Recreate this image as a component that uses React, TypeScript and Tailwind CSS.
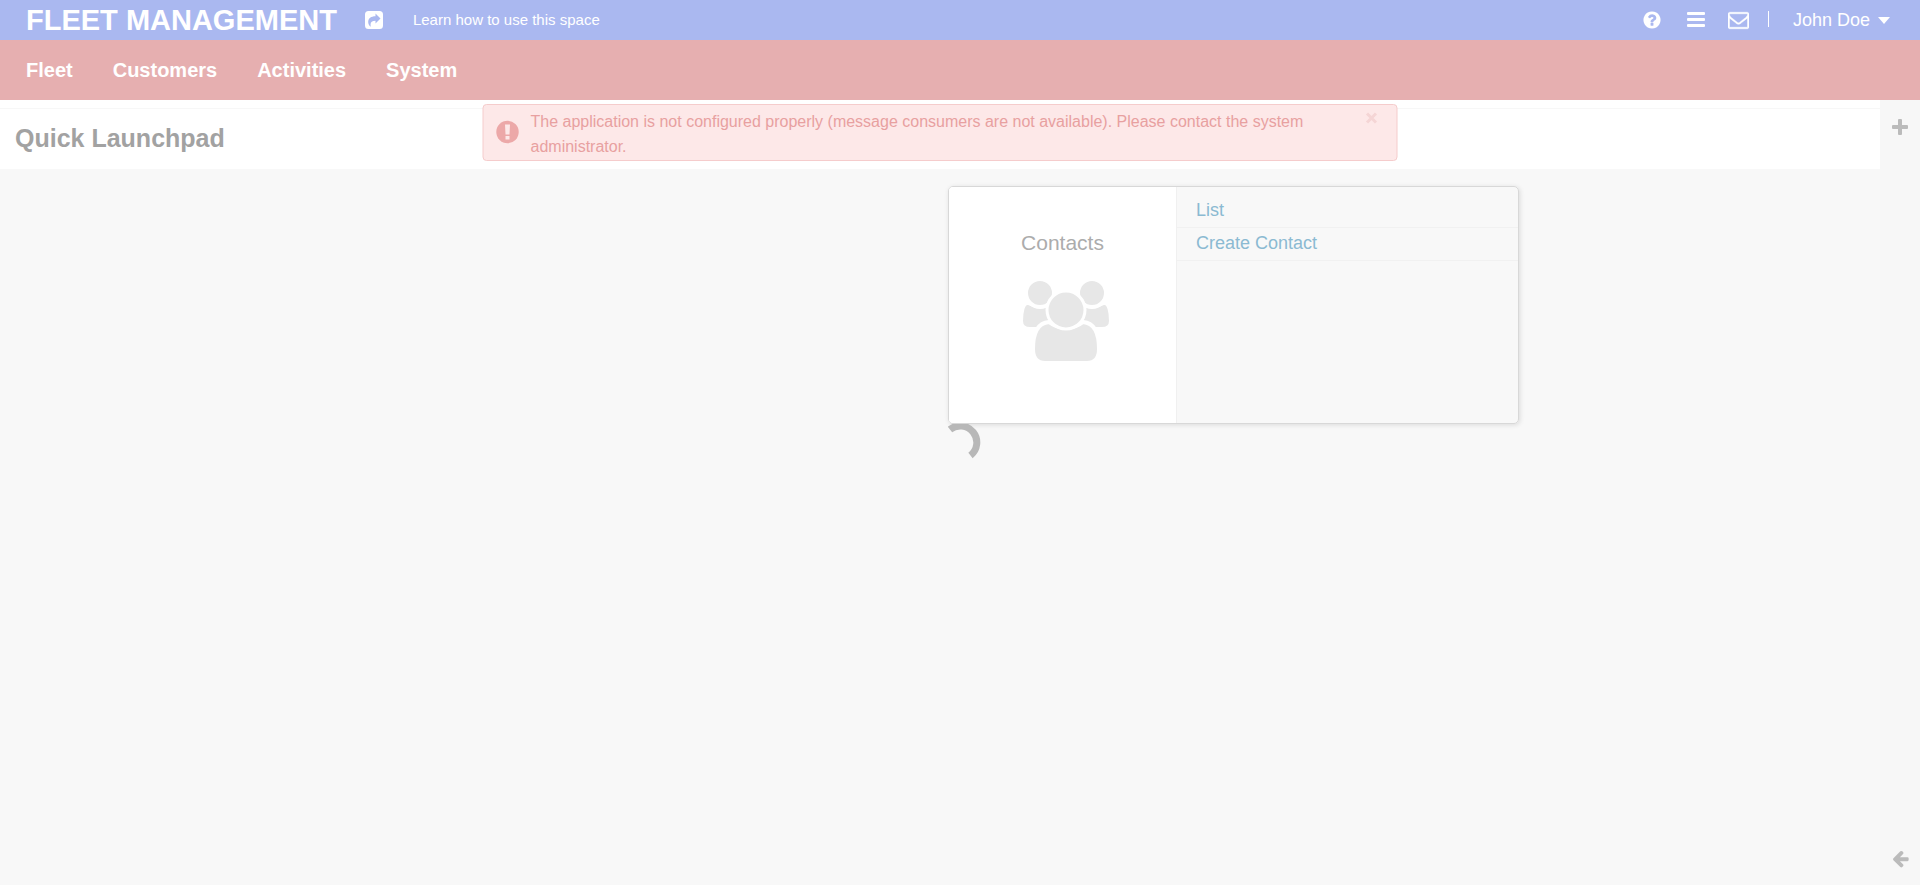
import React from "react";

const QUESTION =
  "M1024 1376v-192q0-14-9-23t-23-9h-192q-14 0-23 9t-9 23v192q0 14 9 23t23 9h192q14 0 23-9t9-23zm256-672q0-88-55.5-163t-138.5-116-170-41q-243 0-371 213-15 24 8 42l132 100q7 6 19 6 16 0 25-12 53-68 86-92 34-24 86-24 48 0 85.5 26t37.5 59q0 38-20 61t-68 45q-63 28-115.5 86.5t-52.5 125.5v36q0 14 9 23t23 9h192q14 0 23-9t9-23q0-19 21.5-49.5t54.5-49.5q32-18 49-28.5t46-35 44.5-48 28-60.5 12.5-81zm384 192q0 209-103 385.5t-279.5 279.5-385.5 103-385.5-103-279.5-279.5-103-385.5 103-385.5 279.5-279.5 385.5-103 385.5 103 279.5 279.5 103 385.5z";
const ENVELOPE =
  "M1664 1504v-768q-32 36-69 66-268 206-426 338-51 43-83 67t-86.500 48.500-102.500 24.500h-2q-48 0-102.500-24.500t-86.500-48.500-83-67q-158-132-426-338-37-30-69-66v768q0 13 9.500 22.500t22.500 9.500h1472q13 0 22.500-9.500t9.500-22.500zm0-1051v-24.500l-.5-13-3-12.500-5.500-9-9-7.500-14-2.500h-1472q-13 0-22.500 9.500t-9.500 22.500q0 168 147 284 193 152 401 317 6 5 35 29.500t46 37.500 44.500 31.500 50.500 27.500 43 9h2q20 0 43-9t50.500-27.500 44.500-31.500 46-37.500 35-29.500q208-165 401-317 54-43 100.500-115.500t46.500-131.500zm128-37v1088q0 66-47 113t-113 47h-1472q-66 0-113-47t-47-113v-1088q0-66 47-113t113-47h1472q66 0 113 47t47 113z";
const ARROW_LEFT =
  "M1664 896v128q0 53-32.5 90.5t-84.5 37.5h-704l293 294q38 36 38 90t-38 90l-75 76q-37 37-90 37-52 0-91-37l-651-652q-37-37-37-90 0-52 37-91l651-650q38-38 91-38 52 0 90 38l75 74q38 38 38 91t-38 91l-293 293h704q52 0 84.5 37.5t32.5 90.5z";

const menu = ["Fleet", "Customers", "Activities", "System"];
const contactLinks = ["List", "Create Contact"];

function TopBar() {
  return (
    <header className="flex h-10 items-center bg-[#aab8f0] pl-[26px] pr-[30px] text-white">
      <h1 className="text-[29px] font-bold leading-10">FLEET MANAGEMENT</h1>
      <button aria-label="Share" className="ml-7">
        <svg width="18" height="18" viewBox="0 0 18 18">
          <path
            fillRule="evenodd"
            fill="currentColor"
            d="M3.500 0h11A3.500 3.500 0 0 1 18 3.500v11a3.500 3.500 0 0 1-3.500 3.500h-11A3.500 3.500 0 0 1 0 14.500v-11A3.500 3.500 0 0 1 3.500 0zM10.500 2.500v2.700C6 5.200 3.200 7.300 3.200 11c0 1.800.8 3.300 2 4.500.3.200.6 0 .5-.4C5 11.500 6.500 9.800 10.500 9.800v2.700l5-5z"
          />
        </svg>
      </button>
      <a href="#learn" className="ml-[30px] text-[15px] leading-10">
        Learn how to use this space
      </a>
      <div className="ml-auto flex items-center">
        <button aria-label="Help">
          <svg width="20" height="20" viewBox="0 0 1792 1792" fill="currentColor">
            <path d={QUESTION} />
          </svg>
        </button>
        <button aria-label="Menu" className="ml-[25px]">
          <svg width="18" height="16" viewBox="0 0 18 16" fill="currentColor">
            <rect y="0" width="18" height="3" rx="1" />
            <rect y="6" width="18" height="3" rx="1" />
            <rect y="12" width="18" height="3" rx="1" />
          </svg>
        </button>
        <button aria-label="Messages" className="ml-[23px]">
          <svg
            width="21"
            height="21"
            viewBox="0 64 1792 1792"
            fill="currentColor"
            stroke="currentColor"
            strokeWidth="40"
          >
            <path d={ENVELOPE} />
          </svg>
        </button>
        <span className="mb-[3px] ml-[19px] h-4 w-px bg-white" />
        <button className="ml-6 flex items-center gap-2 text-[18px] leading-10">
          John Doe
          <svg width="12" height="7" viewBox="0 0 12 7" fill="currentColor">
            <path d="M0 0h12L6 7z" />
          </svg>
        </button>
      </div>
    </header>
  );
}

function Alert() {
  return (
    <div
      role="alert"
      className="absolute left-1/2 top-1 flex w-[915px] -translate-x-1/2 items-center rounded border border-[#f5cccc] bg-[#fde8e8] pb-px pl-3 pt-1 text-base text-[#e8a0a0]"
    >
      <svg className="mb-1 shrink-0" width="24" height="24" viewBox="0 0 24 24">
        <circle cx="12" cy="12" r="11.200" fill="#eca8a8" />
        <path d="M9.500 4.500h5l-.5 10h-4zM10 16h4v3.500h-4z" fill="#fde8e8" />
      </svg>
      <p className="ml-[11px] w-[800px] leading-[25px]">
        The application is not configured properly (message consumers are not available). Please
        contact the system administrator.
      </p>
      <button aria-label="Close" className="ml-auto mr-[19px] self-start pt-[3px] text-[#f5d5d5]">
        <svg width="12" height="12" viewBox="0 0 12 12" fill="none" stroke="currentColor" strokeWidth="3">
          <path d="M1.500 1.500l9 9M10.500 1.500l-9 9" />
        </svg>
      </button>
    </div>
  );
}

function ContactsIcon() {
  return (
    <svg width="88" height="84" viewBox="0 0 88 84" fill="#e7e7e7" stroke="#fff" strokeWidth="2">
      <path d="M6 23c7 4 17 4 23 1v23H8c-5 0-8-2-8-7C0 31 2 22 6 23z" />
      <path d="M82 23c-7 4-17 4-23 1v23h21c5 0 8-2 8-7 0-9-2-18-6-17z" />
      <circle cx="18" cy="12" r="14" strokeWidth="4" />
      <circle cx="70" cy="12" r="14" strokeWidth="4" />
      <path
        strokeWidth="4"
        d="M27 41c10 8 24 8 34 0 12 1 16 13 16 27 0 10-5 14-12 14H23c-7 0-12-4-12-14 0-14 4-26 16-27z"
      />
      <circle cx="44" cy="29" r="19" strokeWidth="3" />
    </svg>
  );
}

export default function App() {
  return (
    <div className="flex min-h-screen flex-col bg-[#f8f8f8] font-['Liberation_Sans',Arial,sans-serif]">
      <TopBar />
      <nav className="flex h-[60px] items-center gap-10 bg-[#e6afb0] pl-[26px] text-xl font-bold text-white">
        {menu.map((item) => (
          <a key={item} href={"#" + item.toLowerCase()}>
            {item}
          </a>
        ))}
      </nav>
      <div className="flex flex-1">
        <main className="relative flex-1">
          <div className="h-[69px] bg-white pt-2">
            <div className="flex h-[61px] items-center border-t border-[#f7f7f7] pl-[15px]">
              <h2 className="text-[25px] font-bold text-[#a2a2a2]">Quick Launchpad</h2>
            </div>
          </div>
          <Alert />
          <div className="ml-[948px] pt-[17px]">
            <section className="flex h-[238px] w-[571px] overflow-hidden rounded-[5px] border border-[#d8d8d8] shadow-[1px_1px_5px_rgba(0,0,0,0.12)]">
              <div className="flex w-[228px] flex-col items-center border-r border-[#f0f0f0] bg-white pt-11">
                <h3 className="text-[21px] leading-6 text-[#acacac]">Contacts</h3>
                <div className="ml-[6px] mt-[26px]">
                  <ContactsIcon />
                </div>
              </div>
              <ul className="flex-1 pt-2 text-[18px]">
                {contactLinks.map((item) => (
                  <li key={item} className="border-b border-[#f1f1f1] pb-[2px] pl-[19px]">
                    <a href="#contacts" className="block leading-[30px] text-[#8bbad2]">
                      {item}
                    </a>
                  </li>
                ))}
              </ul>
            </section>
            <svg role="status" aria-label="Loading" width="36" height="40" viewBox="0 0 36 40" fill="none">
              <path d="M2 5.500A16.500 16.500 0 0 1 22.500 31.500" stroke="#b8b8b8" strokeWidth="7" />
            </svg>
          </div>
        </main>
        <aside className="flex w-10 flex-col items-center justify-between bg-[#f7f7f7] pb-[17px] pt-[19px] text-[#bbb]">
          <button aria-label="Add">
            <svg width="16" height="16" viewBox="0 0 16 16" fill="currentColor">
              <rect x="6" width="4" height="16" rx="1" />
              <rect y="6" width="16" height="4" rx="1" />
            </svg>
          </button>
          <button aria-label="Back">
            <svg width="19" height="19" viewBox="0 0 1792 1792" fill="currentColor">
              <path d={ARROW_LEFT} />
            </svg>
          </button>
        </aside>
      </div>
    </div>
  );
}
